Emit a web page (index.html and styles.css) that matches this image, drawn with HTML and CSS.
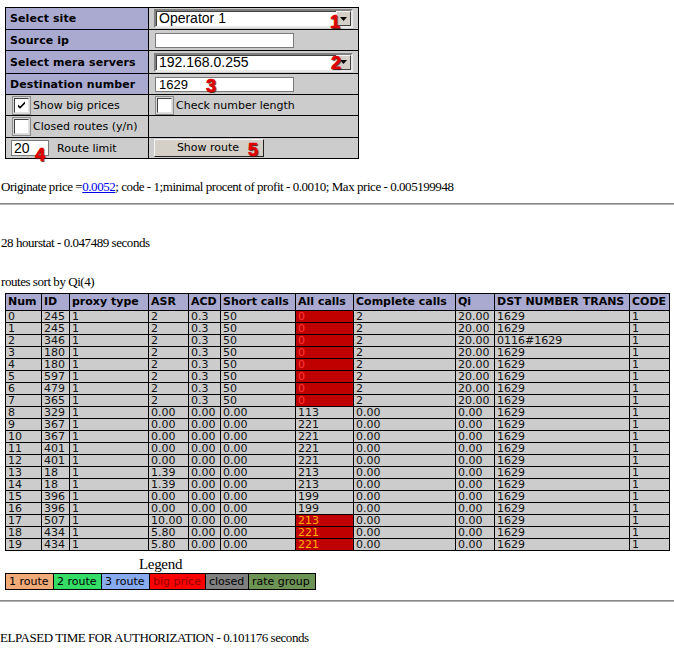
FILE: index.html
```html
<!DOCTYPE html>
<html>
<head>
<meta charset="utf-8">
<title>Routes</title>
<link rel="stylesheet" href="styles.css">
</head>
<body>
<form class="search">
<table class="form">
<colgroup><col class="c-label"><col class="c-value"></colgroup>
<tr class="h22"><th>Select site</th><td><div class="select"><span class="sel-val">Operator 1</span><span class="sel-btn"><svg width="7" height="4" viewBox="0 0 7 4"><path d="M0 0h7l-3.5 4z" fill="#000"/></svg></span></div></td></tr>
<tr class="h21"><th>Source ip</th><td><input class="field" type="text" value=""></td></tr>
<tr class="h23"><th>Select mera servers</th><td><div class="select"><span class="sel-val">192.168.0.255</span><span class="sel-btn"><svg width="7" height="4" viewBox="0 0 7 4"><path d="M0 0h7l-3.5 4z" fill="#000"/></svg></span></div></td></tr>
<tr class="h21"><th>Destination number</th><td><input class="field" type="text" value="1629"></td></tr>
<tr class="h21"><td class="opt"><span class="cb"><span class="cb-box"><svg width="11" height="11" viewBox="0 0 11 11"><path d="M2 4.5l2 2 5-5v2.2l-5 5-2-2z" fill="#000"/></svg></span></span><span class="cb-label">Show big prices</span></td><td class="opt"><span class="cb"><span class="cb-box"></span></span><span class="cb-label">Check number length</span></td></tr>
<tr class="h22"><td class="opt"><span class="cb"><span class="cb-box"></span></span><span class="cb-label">Closed routes (y/n)</span></td><td></td></tr>
<tr class="h21"><td class="opt"><input class="limit" type="text" value="20"><span class="cb-label lim-label">Route limit</span></td><td><span class="button">Show route</span></td></tr>
</table>
</form>

<span class="mark m1">1</span>
<span class="mark m2">2</span>
<span class="mark m3">3</span>
<span class="mark m4">4</span>
<span class="mark m5">5</span>

<p class="line first">Originate price =<a href="#">0.0052</a>; code - 1;minimal procent of profit - 0.0010; Max price - 0.005199948</p>
<hr class="rule">
<p class="line stat">28 hourstat - 0.047489 seconds</p>
<p class="line sort">routes sort by Qi(4)</p>

<table class="routes">
<colgroup>
<col class="w-num"><col class="w-id"><col class="w-proxy"><col class="w-asr"><col class="w-acd"><col class="w-short"><col class="w-all"><col class="w-complete"><col class="w-qi"><col class="w-dst"><col class="w-code">
</colgroup>
<tr><th>Num</th><th>ID</th><th>proxy type</th><th>ASR</th><th>ACD</th><th>Short calls</th><th>All calls</th><th>Complete calls</th><th>Qi</th><th>DST NUMBER TRANS</th><th>CODE</th></tr>
<tr><td>0</td><td>245</td><td>1</td><td>2</td><td>0.3</td><td>50</td><td class="big">0</td><td>2</td><td>20.00</td><td>1629</td><td>1</td></tr>
<tr><td>1</td><td>245</td><td>1</td><td>2</td><td>0.3</td><td>50</td><td class="big">0</td><td>2</td><td>20.00</td><td>1629</td><td>1</td></tr>
<tr><td>2</td><td>346</td><td>1</td><td>2</td><td>0.3</td><td>50</td><td class="big">0</td><td>2</td><td>20.00</td><td>0116#1629</td><td>1</td></tr>
<tr><td>3</td><td>180</td><td>1</td><td>2</td><td>0.3</td><td>50</td><td class="big">0</td><td>2</td><td>20.00</td><td>1629</td><td>1</td></tr>
<tr><td>4</td><td>180</td><td>1</td><td>2</td><td>0.3</td><td>50</td><td class="big">0</td><td>2</td><td>20.00</td><td>1629</td><td>1</td></tr>
<tr><td>5</td><td>597</td><td>1</td><td>2</td><td>0.3</td><td>50</td><td class="big">0</td><td>2</td><td>20.00</td><td>1629</td><td>1</td></tr>
<tr><td>6</td><td>479</td><td>1</td><td>2</td><td>0.3</td><td>50</td><td class="big">0</td><td>2</td><td>20.00</td><td>1629</td><td>1</td></tr>
<tr><td>7</td><td>365</td><td>1</td><td>2</td><td>0.3</td><td>50</td><td class="big">0</td><td>2</td><td>20.00</td><td>1629</td><td>1</td></tr>
<tr><td>8</td><td>329</td><td>1</td><td>0.00</td><td>0.00</td><td>0.00</td><td>113</td><td>0.00</td><td>0.00</td><td>1629</td><td>1</td></tr>
<tr><td>9</td><td>367</td><td>1</td><td>0.00</td><td>0.00</td><td>0.00</td><td>221</td><td>0.00</td><td>0.00</td><td>1629</td><td>1</td></tr>
<tr><td>10</td><td>367</td><td>1</td><td>0.00</td><td>0.00</td><td>0.00</td><td>221</td><td>0.00</td><td>0.00</td><td>1629</td><td>1</td></tr>
<tr><td>11</td><td>401</td><td>1</td><td>0.00</td><td>0.00</td><td>0.00</td><td>221</td><td>0.00</td><td>0.00</td><td>1629</td><td>1</td></tr>
<tr><td>12</td><td>401</td><td>1</td><td>0.00</td><td>0.00</td><td>0.00</td><td>221</td><td>0.00</td><td>0.00</td><td>1629</td><td>1</td></tr>
<tr><td>13</td><td>18</td><td>1</td><td>1.39</td><td>0.00</td><td>0.00</td><td>213</td><td>0.00</td><td>0.00</td><td>1629</td><td>1</td></tr>
<tr><td>14</td><td>18</td><td>1</td><td>1.39</td><td>0.00</td><td>0.00</td><td>213</td><td>0.00</td><td>0.00</td><td>1629</td><td>1</td></tr>
<tr><td>15</td><td>396</td><td>1</td><td>0.00</td><td>0.00</td><td>0.00</td><td>199</td><td>0.00</td><td>0.00</td><td>1629</td><td>1</td></tr>
<tr><td>16</td><td>396</td><td>1</td><td>0.00</td><td>0.00</td><td>0.00</td><td>199</td><td>0.00</td><td>0.00</td><td>1629</td><td>1</td></tr>
<tr><td>17</td><td>507</td><td>1</td><td>10.00</td><td>0.00</td><td>0.00</td><td class="big hot">213</td><td>0.00</td><td>0.00</td><td>1629</td><td>1</td></tr>
<tr><td>18</td><td>434</td><td>1</td><td>5.80</td><td>0.00</td><td>0.00</td><td class="big hot">221</td><td>0.00</td><td>0.00</td><td>1629</td><td>1</td></tr>
<tr><td>19</td><td>434</td><td>1</td><td>5.80</td><td>0.00</td><td>0.00</td><td class="big hot">221</td><td>0.00</td><td>0.00</td><td>1629</td><td>1</td></tr>
</table>

<table class="legend">
<caption>Legend</caption>
<tr><td class="lg1">1 route</td><td class="lg2">2 route</td><td class="lg3">3 route</td><td class="lg-big">big price</td><td class="lg-closed">closed</td><td class="lg-rate">rate group</td></tr>
</table>

<hr class="rule rule2">
<p class="line elapsed">ELPASED TIME FOR AUTHORIZATION - 0.101176 seconds</p>
</body>
</html>
```
FILE: styles.css
```css
* { box-sizing: border-box; }

body {
  margin: 0;
  position: relative;
  background: #fff;
  color: #000;
  font-family: "Liberation Serif", "Times New Roman", serif;
  font-size: 13px;
}

.search { margin: 0; }

/* ---------- search form ---------- */
.form {
  border-collapse: collapse;
  table-layout: fixed;
  width: 353px;
  margin: 7px 0 0 5px;
}
.c-label { width: 143px; }
.c-value { width: 210px; }

.form th,
.form td {
  border: 1px solid #000;
  padding: 0 0 0 4px;
  vertical-align: middle;
  white-space: nowrap;
}
.form th {
  background: #aaaad0;
  text-align: left;
  font: bold 11px "DejaVu Sans", Verdana, sans-serif;
  letter-spacing: 0.1px;
}
.form td { background: #cccccc; }
.form td.opt { padding-left: 6px; }

.h21 { height: 21px; }
.h22 { height: 22px; }
.h23 { height: 23px; }

.select {
  display: flex;
  align-items: center;
  width: 199px;
  height: 19px;
  margin-left: 1px;
  background: #fff;
  border: 2px solid;
  border-color: #808080 #e8e8e8 #e8e8e8 #808080;
  box-shadow: inset 1px 1px 0 #404040;
}
.sel-val {
  flex: 1;
  padding-left: 3px;
  font: 14px "Liberation Sans", Arial, sans-serif;
  line-height: 15px;
}
.sel-btn {
  display: flex;
  align-items: center;
  justify-content: center;
  width: 15px;
  height: 15px;
  background: #d4d0c8;
  border: 1px solid;
  border-color: #f4f4f4 #404040 #404040 #f4f4f4;
}

.field {
  display: block;
  width: 139px;
  height: 15px;
  margin: 0 0 0 2px;
  padding: 0 0 0 3px;
  border: 1px solid #7a7a7a;
  background: #fff;
  font: 13px "Liberation Sans", Arial, sans-serif;
  line-height: 13px;
  color: #000;
}

.opt {
  font: 11px "DejaVu Sans", Verdana, sans-serif;
}
.opt > * { vertical-align: middle; }

.cb {
  display: inline-block;
  width: 19px;
  height: 19px;
  padding: 1px;
  border: 1px solid #8c8c8c;
  background: #d8d8d8;
}
.cb-box {
  display: flex;
  align-items: center;
  justify-content: center;
  width: 15px;
  height: 15px;
  background: #fff;
  border: 1px solid;
  border-color: #404040 #e0e0e0 #e0e0e0 #404040;
}
.cb-label { margin-left: 2px; }

.limit {
  width: 38px;
  height: 16px;
  margin: 0 0 0 -1px;
  padding: 0 0 0 2px;
  border: 1px solid #7a7a7a;
  background: #fff;
  font: 14px "Liberation Sans", Arial, sans-serif;
  line-height: 14px;
  color: #000;
}
.lim-label { margin-left: 8px; }

.button {
  display: block;
  width: 110px;
  height: 18px;
  margin-left: 1px;
  background: #d4d0c8;
  border: 1px solid;
  border-color: #f4f4f4 #202020 #202020 #f4f4f4;
  font: 11px "DejaVu Sans", Verdana, sans-serif;
  line-height: 16px;
  text-align: center;
  padding-right: 2px;
}

/* annotation digits over the form */
.mark {
  position: absolute;
  font: bold 18px "Liberation Sans", Arial, sans-serif;
  line-height: 18px;
  color: #e00000;
  -webkit-text-stroke: 0.6px #e00000;
  text-shadow: 1px 1px 1px #202020;
}
.m1 { left: 330px; top: 13px; }
.m2 { left: 331px; top: 54px; }
.m3 { left: 206px; top: 77px; }
.m4 { left: 35px; top: 146px; }
.m5 { left: 248px; top: 141px; }

/* ---------- text ---------- */
.line {
  margin: 0;
  line-height: 16px;
  letter-spacing: -0.45px;
  white-space: nowrap;
  padding-left: 1px;
}
.line a { color: #0000ee; }
.first { margin-top: 20px; }
.stat { margin-top: 30px; }
.sort { margin-top: 23px; }
.elapsed { margin-top: 28px; padding-left: 0; }

.rule {
  margin: 8px 0 0;
  height: 2px;
  border: 0;
  border-top: 1px solid #888;
  border-bottom: 1px solid #b4b4b4;
}
.rule2 { margin-top: 10px; }

/* ---------- routes table ---------- */
.routes {
  border-collapse: collapse;
  table-layout: fixed;
  width: 665px;
  margin: 3px 0 0 5px;
  font: 11px "DejaVu Sans", Verdana, sans-serif;
}
.w-num { width: 36px; }
.w-id { width: 28px; }
.w-proxy { width: 79px; }
.w-asr { width: 40px; }
.w-acd { width: 32px; }
.w-short { width: 75px; }
.w-all { width: 58px; }
.w-complete { width: 102px; }
.w-qi { width: 39px; }
.w-dst { width: 135px; }
.w-code { width: 40px; }

.routes th,
.routes td {
  border: 1px solid #000;
  padding: 0 0 0 2px;
  text-align: left;
  white-space: nowrap;
  overflow: hidden;
}
.routes th {
  height: 17px;
  background: #aaaad0;
  font-weight: bold;
  line-height: 14px;
}
.routes td {
  height: 12px;
  line-height: 11px;
  background: #cccccc;
  color: #111;
}
.routes td.big {
  background: #c00000;
  color: #ff3838;
}
.routes td.hot { color: #ffb000; }

/* ---------- legend ---------- */
.legend {
  border-collapse: collapse;
  margin: 5px 0 0 5px;
  font: 11px "DejaVu Sans", Verdana, sans-serif;
}
.legend caption {
  font: 15px "Liberation Serif", "Times New Roman", serif;
  line-height: 17px;
  letter-spacing: -0.3px;
}
.legend td {
  height: 16px;
  border: 1px solid #000;
  padding: 0 2px 0 3px;
  line-height: 13px;
  white-space: nowrap;
}
.lg1 { background: #f0aa78; width: 48px; }
.lg2 { background: #33dd66; width: 48px; }
.lg3 { background: #88aaee; width: 48px; }
.lg-big { background: #ff0000; color: #900000; width: 56px; }
.lg-closed { background: #808080; width: 43px; }
.lg-rate { background: #6e9455; width: 67px; }
```
